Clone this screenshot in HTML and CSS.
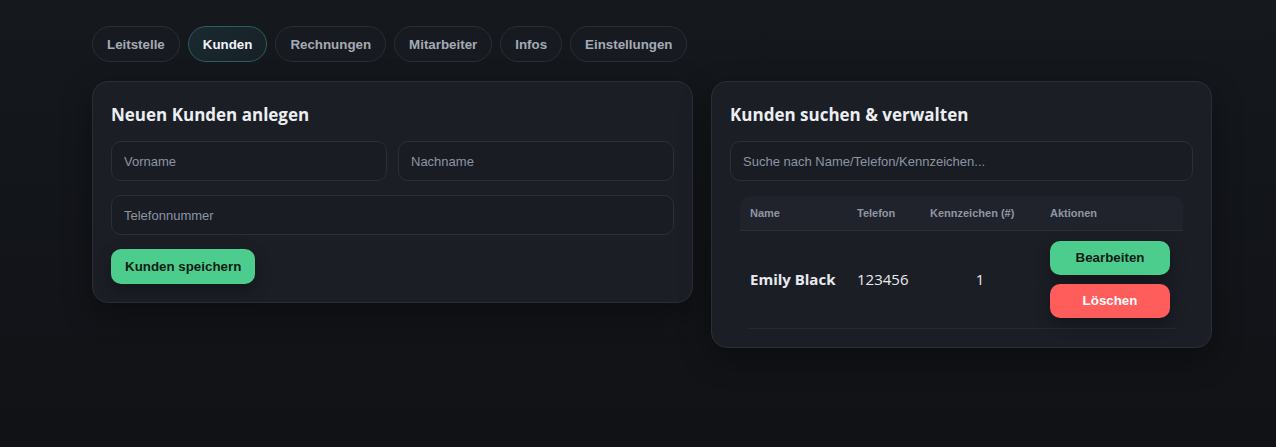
FILE: index.html
```html
<!DOCTYPE html>
<html lang="de">
<head>
<meta charset="utf-8">
<title>Kunden</title>
<link rel="stylesheet" href="styles.css">
</head>
<body>
<div class="app">
  <nav class="tabs">
    <button class="tab">Leitstelle</button>
    <button class="tab active">Kunden</button>
    <button class="tab">Rechnungen</button>
    <button class="tab">Mitarbeiter</button>
    <button class="tab">Infos</button>
    <button class="tab">Einstellungen</button>
  </nav>
  <div class="grid">
    <section class="card">
      <h2>Neuen Kunden anlegen</h2>
      <div class="row2">
        <input class="field" placeholder="Vorname">
        <input class="field" placeholder="Nachname">
      </div>
      <input class="field full" placeholder="Telefonnummer">
      <button class="btn green save">Kunden speichern</button>
    </section>
    <section class="card">
      <h2>Kunden suchen &amp; verwalten</h2>
      <input class="field full search" placeholder="Suche nach Name/Telefon/Kennzeichen...">
      <div class="tablewrap">
        <table class="tbl">
          <thead>
            <tr><th class="c-name">Name</th><th class="c-tel">Telefon</th><th class="c-kz">Kennzeichen (#)</th><th class="c-act">Aktionen</th></tr>
          </thead>
          <tbody>
            <tr>
              <td class="c-name name">Emily Black</td>
              <td class="c-tel">123456</td>
              <td class="c-kz num">1</td>
              <td class="c-act">
                <div class="actions">
                  <button class="btn green act">Bearbeiten</button>
                  <button class="btn red act">Löschen</button>
                </div>
              </td>
            </tr>
          </tbody>
        </table>
        <div class="rowline"></div>
      </div>
    </section>
  </div>
</div>
</body>
</html>
```

FILE: styles.css
```css
* { box-sizing: border-box; }
html, body { height: 100%; }
body {
  margin: 0;
  background: linear-gradient(180deg, #15181d 0%, #101216 100%);
  font-family: "Open Sans", "Noto Sans", sans-serif;
  color: #e8eaef;
}
.app {
  padding: 26px 0 0 92px;
  width: 1212px;
}
.tabs {
  display: flex;
  gap: 8px;
}
.tab {
  height: 36px;
  padding: 0 14px;
  border-radius: 18px;
  border: 1px solid #2a2e36;
  background: #171a20;
  color: #a4abb6;
  font-family: "Liberation Sans", Arial, sans-serif;
  font-weight: bold;
  font-size: 13.33px;
}
.tab.active {
  background: linear-gradient(135deg, #1a2a30 0%, #172126 100%);
  border-color: #2f5b62;
  color: #f1f4f6;
}
.grid {
  display: grid;
  grid-template-columns: 601px 501px;
  gap: 18px;
  margin-top: 19px;
  align-items: start;
}
.card {
  background: #1b1e25;
  border: 1px solid #2a2e37;
  border-radius: 16px;
  padding: 18px;
  box-shadow: 0 10px 30px rgba(0,0,0,0.35);
}
h2 {
  margin: 2px 0 13px 0;
  font-size: 17px;
  font-weight: 700;
  color: #eceef2;
  line-height: 26px;
}
.row2 {
  display: grid;
  grid-template-columns: 1fr 1fr;
  gap: 11px;
}
.field {
  height: 40px;
  border: 1px solid #2b2f38;
  background: #191c23;
  border-radius: 10px;
  padding: 0 12px;
  font-family: "Liberation Sans", Arial, sans-serif;
  font-size: 13px;
  color: #e8eaef;
  outline: none;
  width: 100%;
  display: block;
}
.field::placeholder { color: #8c95a4; }
.full { margin-top: 14px; }
.search { margin-top: 0; }
.btn {
  border: none;
  border-radius: 10px;
  font-family: "Liberation Sans", Arial, sans-serif;
  font-weight: bold;
  font-size: 13.33px;
  cursor: pointer;
}
.green { background: #4ccd8d; color: #0f1c15; }
.red { background: #ff5c5c; color: #ffffff; }
.save {
  margin-top: 14px;
  height: 35px;
  padding: 0 14px;
  display: block;
  box-shadow: 0 6px 16px rgba(0,0,0,0.3);
}
.tablewrap {
  padding: 15px 10px 0 10px;
}
.tbl {
  width: 100%;
  border-collapse: collapse;
}
.tbl thead tr { background: #20232b; }
.tbl th {
  height: 34px;
  text-align: left;
  font-family: "Liberation Sans", Arial, sans-serif;
  font-size: 11px;
  font-weight: bold;
  color: #8f96a3;
  padding: 0 10px;
  border-bottom: 1px solid #2a2e37;
}
.tbl th:first-child { border-top-left-radius: 10px; }
.tbl th:last-child { border-top-right-radius: 10px; }
.tbl td {
  padding: 10px 10px;
  font-size: 15px;
  color: #e8eaef;
  height: 98px;
}
.rowline {
  height: 1px;
  margin: 0 8px;
  background: #262a32;
}
.c-name { width: 107px; }
.c-tel { width: 73px; }
.c-kz { width: 120px; }
.name { font-weight: 700; font-size: 15.4px; }
.num { text-align: center; }
.actions {
  display: flex;
  flex-direction: column;
  gap: 9px;
  width: 120px;
}
.act {
  height: 34px;
  width: 120px;
  box-shadow: 0 6px 16px rgba(0,0,0,0.3);
}
```
